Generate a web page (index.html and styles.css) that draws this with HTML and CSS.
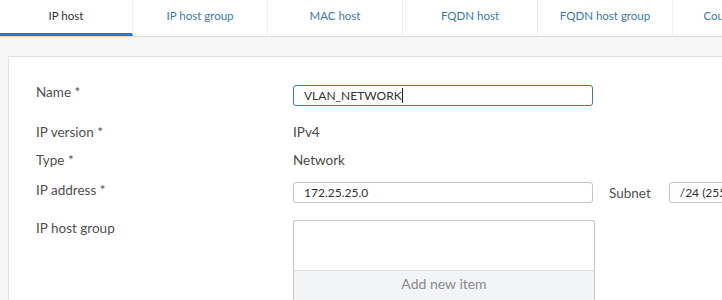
FILE: index.html
```html
<!DOCTYPE html>
<html>
	<head>
		<meta charset="utf-8" />
		<title>IP host</title>
		<link rel="stylesheet" href="styles.css">
	</head>
	<body>
		<nav class="tabs">
			<a class="tab active">IP host</a>
			<a class="tab">IP host group</a>
			<a class="tab">MAC host</a>
			<a class="tab">FQDN host</a>
			<a class="tab">FQDN host group</a>
			<a class="tab">Country group</a>
		</nav>

		<main class="content">
			<div class="card">
				<div class="form">
					<label class="label">Name *</label>
					<div class="field">
						<div class="input focused">VLAN_NETWORK<span class="caret"></span></div>
					</div>

					<label class="label">IP version *</label>
					<div class="field text">IPv4</div>

					<label class="label">Type *</label>
					<div class="field text">Network</div>

					<label class="label">IP address *</label>
					<div class="field inline">
						<div class="input">172.25.25.0</div>
						<span class="subnet-label">Subnet</span>
						<div class="input select">/24 (255.255.255.0)</div>
					</div>

					<label class="label">IP host group</label>
					<div class="field">
						<div class="listbox">
							<div class="list-items"></div>
							<div class="list-add">Add new item</div>
						</div>
					</div>
				</div>
			</div>
		</main>
	</body>
</html>
```

FILE: styles.css
```css
* {
	padding: 0;
	margin: 0;
	box-sizing: border-box;
}

html, body {
	height: 100%;
	overflow: hidden;
}

body {
	background: #f6f6f6;
	font-family: 'Lato', sans-serif;
	font-size: 13.5px;
	color: #4a4a4a;
}

/* Tabs */
.tabs {
	display: flex;
	height: 37px;
	background: #fff;
	border-bottom: 1px solid #dedede;
	white-space: nowrap;
}

.tab {
	flex: 0 0 135px;
	display: flex;
	justify-content: center;
	align-items: center;
	padding-bottom: 6px;
	border-right: 1px solid #f0f0f0;
	color: #3b78b3;
	font-size: 11.5px;
}

.tab:first-child {
	flex-basis: 133px;
}

.tab.active {
	color: #333;
	border-bottom: 3px solid #2a78c2;
	padding-bottom: 3px;
}

/* Card */
.content {
	padding: 19px 0 0 8px;
}

.card {
	background: #fff;
	border: 1px solid #e1e1e1;
	border-right: none;
	height: 300px;
	padding: 28px 0 0 27px;
}

.form {
	display: grid;
	grid-template-columns: 257px auto;
	grid-template-rows: 38px 28px 30px 38px auto;
}

.label {
	line-height: 15px;
	color: #505050;
}

.field.text {
	line-height: 15px;
}

.form > :nth-child(n+3) {
	padding-top: 2px;
}

.form > .field.inline,
.form > .field:last-child {
	padding-top: 1px;
}

.field.inline {
	display: flex;
	align-items: center;
	align-self: start;
}

.input {
	display: flex;
	align-items: center;
	width: 300px;
	height: 21px;
	padding: 0 10px;
	border: 1px solid #c4c4c4;
	border-radius: 3px;
	color: #333;
	font-size: 12px;
	white-space: nowrap;
	overflow: hidden;
}

.input.focused {
	border-color: #3c7bb0;
}

.caret {
	display: inline-block;
	width: 1px;
	height: 15px;
	background: #222;
}

.subnet-label {
	margin: 0 18px 0 16px;
	color: #505050;
}

.input.select {
	width: 120px;
}

.listbox {
	width: 302px;
	border: 1px solid #c4c4c4;
	border-bottom: none;
	border-radius: 3px 3px 0 0;
}

.list-items {
	height: 50px;
	border-bottom: 1px solid #dcdcdc;
}

.list-add {
	height: 40px;
	padding-top: 4px;
	background: #f3f4f6;
	text-align: center;
	color: #8a8a8a;
	font-size: 14px;
}
```
